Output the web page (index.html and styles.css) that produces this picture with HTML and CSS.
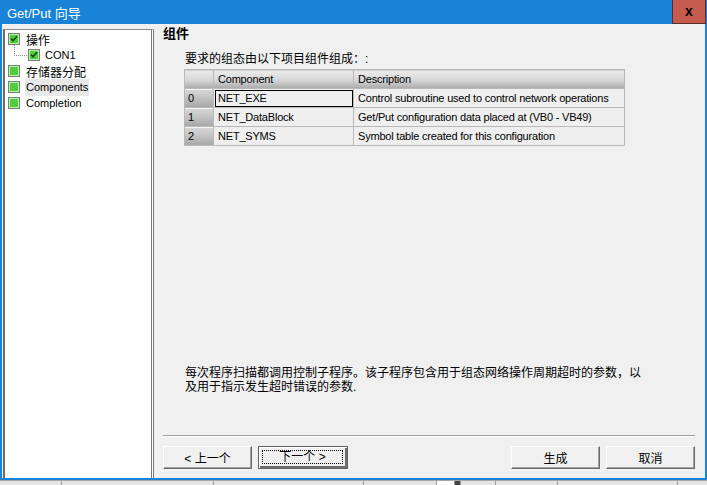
FILE: index.html
```html
<!DOCTYPE html>
<html lang="zh">
<head>
  <meta charset="UTF-8" />
  <title>Get/Put 向导</title>
  <link rel="stylesheet" href="styles.css">
</head>
<body>
<div class="window">
  <div class="titlebar">
    <span class="title">Get/Put 向导</span>
    <span class="close">x</span>
  </div>
  <div class="frame">
    <aside class="tree">
      <ul>
        <li class="node">
          <svg class="box" width="12" height="12" viewBox="0 0 12 12"><rect x="0.5" y="0.5" width="11" height="11" fill="#fff" stroke="#7d7d7d"/><rect x="1.5" y="1.5" width="9" height="9" fill="#4fcf3c" stroke="#b7eeaa"/><path d="M3 5.5l2 2.2 4-4.4" fill="none" stroke="#17470f" stroke-width="1.6"/></svg>
          <span class="cjk">操作</span>
        </li>
        <li class="node child">
          <svg class="box" width="12" height="12" viewBox="0 0 12 12"><rect x="0.5" y="0.5" width="11" height="11" fill="#fff" stroke="#7d7d7d"/><rect x="1.5" y="1.5" width="9" height="9" fill="#4fcf3c" stroke="#b7eeaa"/><path d="M3 5.5l2 2.2 4-4.4" fill="none" stroke="#17470f" stroke-width="1.6"/></svg>
          <span>CON1</span>
        </li>
        <li class="node">
          <svg class="box" width="12" height="12" viewBox="0 0 12 12"><rect x="0.5" y="0.5" width="11" height="11" fill="#fff" stroke="#7d7d7d"/><rect x="1.5" y="1.5" width="9" height="9" fill="#4fcf3c" stroke="#b7eeaa"/></svg>
          <span class="cjk">存储器分配</span>
        </li>
        <li class="node">
          <svg class="box" width="12" height="12" viewBox="0 0 12 12"><rect x="0.5" y="0.5" width="11" height="11" fill="#fff" stroke="#7d7d7d"/><rect x="1.5" y="1.5" width="9" height="9" fill="#4fcf3c" stroke="#b7eeaa"/></svg>
          <span class="selected">Components</span>
        </li>
        <li class="node">
          <svg class="box" width="12" height="12" viewBox="0 0 12 12"><rect x="0.5" y="0.5" width="11" height="11" fill="#fff" stroke="#7d7d7d"/><rect x="1.5" y="1.5" width="9" height="9" fill="#4fcf3c" stroke="#b7eeaa"/></svg>
          <span>Completion</span>
        </li>
      </ul>
    </aside>

    <main class="page">
      <h1>组件</h1>
      <p class="intro">要求的组态由以下项目组件组成：:</p>
      <table class="grid">
        <tr>
          <th class="idx"></th>
          <th class="name">Component</th>
          <th>Description</th>
        </tr>
        <tr>
          <td class="idx">0</td>
          <td class="focus">NET_EXE</td>
          <td>Control subroutine used to control network operations</td>
        </tr>
        <tr>
          <td class="idx">1</td>
          <td>NET_DataBlock</td>
          <td>Get/Put configuration data placed at (VB0 - VB49)</td>
        </tr>
        <tr>
          <td class="idx">2</td>
          <td>NET_SYMS</td>
          <td>Symbol table created for this configuration</td>
        </tr>
      </table>

      <div class="spacer"></div>

      <p class="note">每次程序扫描都调用控制子程序。该子程序包含用于组态网络操作周期超时的参数，以<br>及用于指示发生超时错误的参数.</p>
      <div class="sep"></div>
      <div class="buttons">
        <button>&lt; 上一个</button>
        <button class="default"><span class="focus-ring">下一个 &gt;</span></button>
        <div class="gap"></div>
        <button>生成</button>
        <button>取消</button>
      </div>
    </main>
  </div>
</div>
<div class="taskstrip">
  <span style="width:61px"></span>
  <span style="width:151px"></span>
  <span style="width:149px"></span>
  <span style="width:72px"></span>
  <span class="white" style="width:17px"></span>
  <span class="dark" style="width:5px"></span>
  <span style="width:34px"></span>
  <span style="width:61px"></span>
  <span style="width:119px"></span>
</div>
</body>
</html>
```

FILE: styles.css
```css
body {
  margin: 0;
  width: 707px;
  height: 485px;
  overflow: hidden;
  background: #dcdcdc;
  font-family: "Liberation Sans", "Noto Sans CJK SC", sans-serif;
  font-size: 11px;
  color: #000;
}
.window {
  height: 480px;
  display: flex;
  flex-direction: column;
  background: #f0f0f0;
}
.titlebar {
  height: 24px;
  flex: none;
  display: flex;
  align-items: center;
  justify-content: space-between;
  background: #1883d7;
  color: white;
}
.title {
  padding-left: 7px;
  font-size: 13px;
}
.close {
  box-sizing: border-box;
  width: 34px;
  height: 24px;
  margin-right: 1px;
  background: #c75b50;
  border: 1px solid #5b2c27;
  border-top: none;
  color: #000;
  font-weight: bold;
  font-size: 14px;
  line-height: 22px;
  text-align: center;
}
.frame {
  flex: 1;
  display: flex;
  border: 2px solid #1883d7;
  border-top: none;
  min-height: 0;
}
.tree {
  box-sizing: border-box;
  width: 151px;
  margin: 5px 0 0 1px;
  background: white;
  border-left: 2px solid #6d6d6d;
  border-top: 1px solid #8a8a8a;
  border-right: 3px double #7a7a7a;
}
.tree ul {
  list-style: none;
  margin: 0;
  padding: 1px 0 0 3px;
}
.node {
  position: relative;
  height: 16px;
  display: flex;
  align-items: center;
  gap: 6px;
  white-space: nowrap;
}
.node .box {
  flex: none;
}
.node .cjk {
  font-size: 12px;
}
.node.child {
  padding-left: 20px;
  gap: 5px;
}
.node.child::before {
  content: "";
  position: absolute;
  left: 6px;
  top: -2px;
  width: 12px;
  height: 10px;
  border-left: 1px dotted #8c8c8c;
  border-bottom: 1px dotted #8c8c8c;
}
.selected {
  background: #e8e8e8;
  margin-left: -1px;
  padding: 2px 1px 3px 1px;
}
.page {
  flex: 1;
  display: flex;
  flex-direction: column;
  padding: 2px 10px 9px 9px;
}
h1 {
  margin: 0;
  font-size: 13px;
  line-height: 16px;
  font-weight: bold;
}
.intro {
  margin: 9px 0 0 22px;
  font-size: 12px;
  line-height: 16px;
}
.grid {
  margin: 2px 0 0 21px;
  width: 441px;
  border-collapse: collapse;
  border: 1px solid #a0a0a0;
  letter-spacing: -0.2px;
}
.grid tr {
  height: 19px;
}
.grid th, .grid td {
  padding: 0 0 0 4px;
  border: 1px solid #b9b9b9;
  text-align: left;
  font-weight: normal;
  white-space: nowrap;
}
.grid th {
  background: linear-gradient(#ececec, #d6d6d6 55%, #a9a9a9);
}
.grid td {
  background: #efefef;
}
.grid .idx {
  width: 25px;
  padding-left: 3px;
}
.grid td.idx {
  background: linear-gradient(#d8d8d8, #bcbcbc 60%, #a6a6a6);
  box-shadow: inset 0 1px #f4f4f4;
}
.grid .name {
  width: 135px;
}
.grid td.focus {
  outline: 1px solid #000;
  outline-offset: -2px;
}
.spacer {
  flex: 1;
}
.note {
  margin: 0 0 0 22px;
  font-size: 12px;
  line-height: 14px;
}
.sep {
  margin-top: 41px;
  border-top: 1px solid #a0a0a0;
  border-bottom: 1px solid #fff;
}
.buttons {
  margin-top: 9px;
  display: flex;
  gap: 6px;
}
.gap {
  flex: 1;
}
button {
  box-sizing: border-box;
  width: 89px;
  height: 23px;
  padding: 0;
  background: #f0f0f0;
  border: 1px solid;
  border-color: #fff #696969 #696969 #fff;
  box-shadow: inset -1px -1px #a0a0a0;
  font-family: "Liberation Sans", "Noto Sans CJK SC", sans-serif;
  font-size: 12px;
  color: #000;
}
button.default {
  width: 90px;
  border: 1px solid #646464;
  box-shadow: inset 1px 1px #fff, inset -2px -2px #6e6e6e;
  padding: 3px 4px 4px 3px;
}
.focus-ring {
  display: block;
  height: 100%;
  box-sizing: border-box;
  border: 1px dotted #000;
  line-height: 12px;
}
.taskstrip {
  height: 5px;
  display: flex;
  border-top: 1px solid #a8a8a8;
  background: #e4e4e4;
}
.taskstrip span {
  flex: none;
  border-right: 1px solid #9a9a9a;
}
.taskstrip .white {
  background: #fff;
}
.taskstrip .dark {
  background: #444;
}
```
